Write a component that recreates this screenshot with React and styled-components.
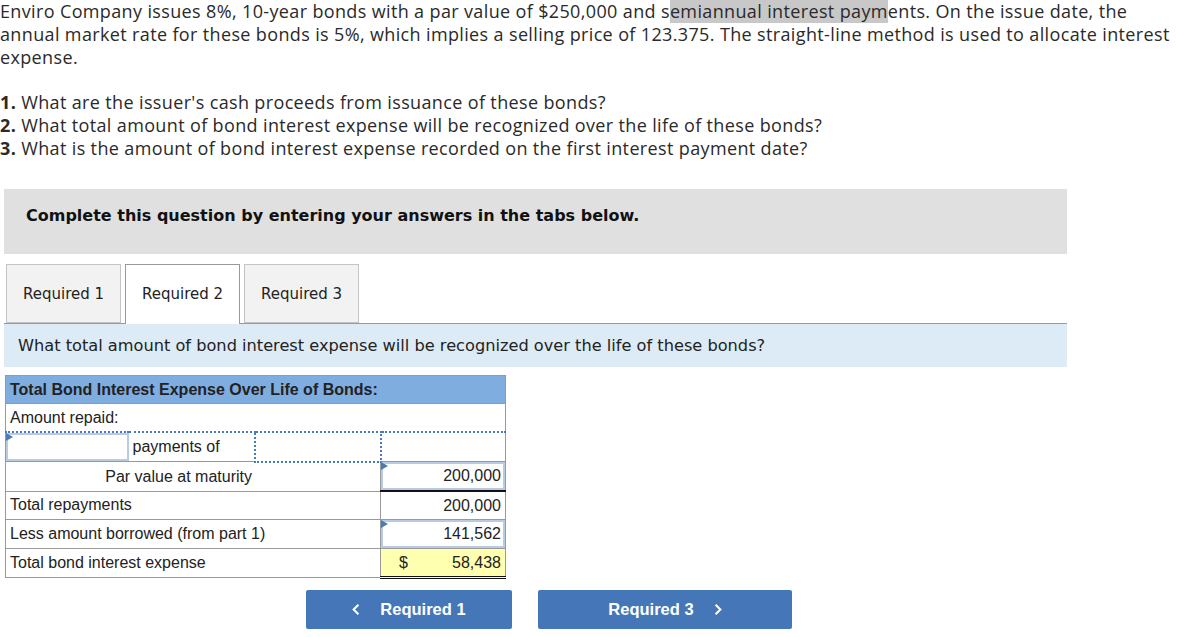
import React from 'react';
import styled, { createGlobalStyle } from 'styled-components';

const GlobalStyle = createGlobalStyle`
  body {
    margin: 0;
    background: #fff;
    color: #222;
  }
`;

const rows = [
  { label: 'Total repayments', value: '200,000' },
  { label: 'Less amount borrowed (from part 1)', value: '141,562', input: true },
];

const App = () => {
  return (
    <Page>
      <GlobalStyle/>
      <Intro>
        Enviro Company issues 8%, 10-year bonds with a par value of $250,000 and s<Mark>emiannual interest paym</Mark>ents. On the issue date, the<br/>
        annual market rate for these bonds is 5%, which implies a selling price of 123.375. The straight-line method is used to allocate interest<br/>
        expense.
      </Intro>
      <Questions>
        <li><b>1.</b> What are the issuer's cash proceeds from issuance of these bonds?</li>
        <li><b>2.</b> What total amount of bond interest expense will be recognized over the life of these bonds?</li>
        <li><b>3.</b> What is the amount of bond interest expense recorded on the first interest payment date?</li>
      </Questions>
      <Instructions>Complete this question by entering your answers in the tabs below.</Instructions>
      <Tabs>
        <Tab>Required 1</Tab>
        <Tab active>Required 2</Tab>
        <Tab>Required 3</Tab>
      </Tabs>
      <Prompt>What total amount of bond interest expense will be recognized over the life of these bonds?</Prompt>
      <Sheet>
        <colgroup>
          <col style={{width: 123}}/>
          <col style={{width: 126}}/>
          <col style={{width: 126}}/>
          <col style={{width: 125}}/>
        </colgroup>
        <tbody>
          <tr>
            <HeadCell colSpan={4}>Total Bond Interest Expense Over Life of Bonds:</HeadCell>
          </tr>
          <tr>
            <Cell colSpan={4}>Amount repaid:</Cell>
          </tr>
          <DottedRow>
            <Cell pad={0}><InputBox flag/></Cell>
            <Cell>payments of</Cell>
            <DottedCell/>
            <Cell/>
          </DottedRow>
          <tr>
            <Cell colSpan={3} align="right" indent={124}>Par value at maturity</Cell>
            <ValueCell underline="single"><InputBox flag>200,000</InputBox></ValueCell>
          </tr>
          {rows.map(r =>
            <tr key={r.label}>
              <Cell colSpan={3}>{r.label}</Cell>
              <ValueCell>
                {r.input ? <InputBox flag>{r.value}</InputBox> : <Plain>{r.value}</Plain>}
              </ValueCell>
            </tr>
          )}
          <tr>
            <Cell colSpan={3}>Total bond interest expense</Cell>
            <ValueCell underline="double" total>
              <Plain><span>$</span>58,438</Plain>
            </ValueCell>
          </tr>
        </tbody>
      </Sheet>
      <Nav>
        <NavButton>
          <Chevron viewBox="0 0 10 16"><path d="M8 2 L2 8 L8 14"/></Chevron>
          Required 1
        </NavButton>
        <NavButton wide>
          Required 3
          <Chevron viewBox="0 0 10 16"><path d="M2 2 L8 8 L2 14"/></Chevron>
        </NavButton>
      </Nav>
    </Page>
  );
};

const Page = styled.div`
  width: 1177px;
  font-family: "Open Sans", Lato, sans-serif;
`;

const Intro = styled.p`
  margin: 0;
  font-size: 18px;
  line-height: 23px;
  letter-spacing: 0.36px;
  color: #2a2a2a;
  white-space: nowrap;
`;

const Mark = styled.span`
  background: #c8c8c8;
`;

const Questions = styled.ol`
  list-style: none;
  margin: 22px 0 0;
  padding: 0;
  font-size: 18px;
  line-height: 23px;
  letter-spacing: 0.36px;
  color: #2a2a2a;
  b {
    font-weight: 700;
  }
`;

const Instructions = styled.div`
  margin: 29px 0 0 4px;
  width: 1063px;
  height: 65px;
  box-sizing: border-box;
  padding: 17px 0 0 22px;
  background: #e0e0e0;
  font-family: "DejaVu Sans", Verdana, sans-serif;
  font-weight: bold;
  font-size: 16px;
  color: #111;
`;

const Tabs = styled.div`
  display: flex;
  gap: 4px;
  margin: 10px 0 0 6px;
  height: 59px;
  align-items: flex-end;
`;

const Tab = styled.div`
  width: 115px;
  height: ${({active}) => active ? '60px' : '59px'};
  margin-bottom: ${({active}) => active ? '-1px' : '0'};
  box-sizing: border-box;
  display: flex;
  align-items: center;
  justify-content: center;
  background: ${({active}) => active ? '#fff' : '#f2f2f2'};
  border: 1px solid ${({active}) => active ? '#999' : '#c4c4c4'};
  border-bottom: ${({active}) => active ? 'none' : '1px solid #c4c4c4'};
  font-family: "DejaVu Sans", Verdana, sans-serif;
  font-size: 15px;
  color: #222;
  position: relative;
  z-index: 1;
  padding-bottom: ${({active}) => active ? '1px' : '0'};
`;

const Prompt = styled.div`
  margin-left: 4px;
  width: 1063px;
  height: 44px;
  box-sizing: border-box;
  border-top: 1px solid #999;
  background: #ddebf7;
  padding: 12px 0 0 14px;
  font-family: "DejaVu Sans", Verdana, sans-serif;
  font-size: 16.2px;
  color: #222;
`;

const Sheet = styled.table`
  margin: 8px 0 0 5px;
  width: 500px;
  table-layout: fixed;
  border-collapse: collapse;
  font-family: "Liberation Sans", Arial, sans-serif;
  font-size: 16px;
  color: #222;
  border: 1px solid #999;
`;

const HeadCell = styled.td`
  height: 27px;
  padding: 0 4px;
  background: #80ade0;
  font-weight: bold;
  border-bottom: 1px solid #999;
`;

const Cell = styled.td`
  height: 27px;
  padding: ${({pad, indent}) => pad === 0 ? '0' : indent ? '0 128px 0 4px' : '0 4px'};
  text-align: ${({align}) => align || 'left'};
  border-bottom: 1px solid #999;
  border-right: ${({colSpan}) => colSpan === 4 ? 'none' : '1px solid #999'};
  vertical-align: middle;
  white-space: nowrap;
`;

const DottedRow = styled.tr`
  td {
    border-top: 2px dotted #4a7ab8;
  }
  td:first-child, td:nth-child(2) {
    border-right: none;
  }
`;

const DottedCell = styled.td`
  border: 2px dotted #4a7ab8 !important;
`;

const ValueCell = styled.td`
  height: 27px;
  padding: 0;
  border-bottom: ${({underline}) => underline === 'double' ? '3px double #111' : underline === 'single' ? '2px solid #111' : '1px solid #999'};
  background: ${({total}) => total ? '#ffffb0' : '#fff'};
  vertical-align: middle;
`;

const InputBox = styled.div`
  position: relative;
  height: 28px;
  box-sizing: border-box;
  border: 2px solid #b9cbe3;
  background: #fff;
  text-align: right;
  padding: 0 2px;
  line-height: 24px;
  &::before {
    content: '';
    display: ${({flag}) => flag ? 'block' : 'none'};
    position: absolute;
    left: -2px;
    top: -2px;
    border-left: 7px solid #4a7ab8;
    border-top: 4px solid transparent;
    border-bottom: 4px solid transparent;
  }
`;

const Plain = styled.div`
  display: flex;
  justify-content: space-between;
  padding: 0 4px 0 18px;
  text-align: right;
  &:not(:has(span)) {
    justify-content: flex-end;
  }
`;

const Nav = styled.div`
  display: flex;
  gap: 26px;
  margin: 11px 0 0 306px;
`;

const NavButton = styled.div`
  width: ${({wide}) => wide ? '254px' : '206px'};
  height: 39px;
  display: flex;
  align-items: center;
  justify-content: center;
  gap: 20px;
  background: #4577b8;
  border-radius: 2px;
  color: #fff;
  font-family: "Liberation Sans", Arial, sans-serif;
  font-weight: bold;
  font-size: 16.5px;
`;

const Chevron = styled.svg`
  width: 8px;
  height: 13px;
  fill: none;
  stroke: #fff;
  stroke-width: 2.5;
`;

export default App;
